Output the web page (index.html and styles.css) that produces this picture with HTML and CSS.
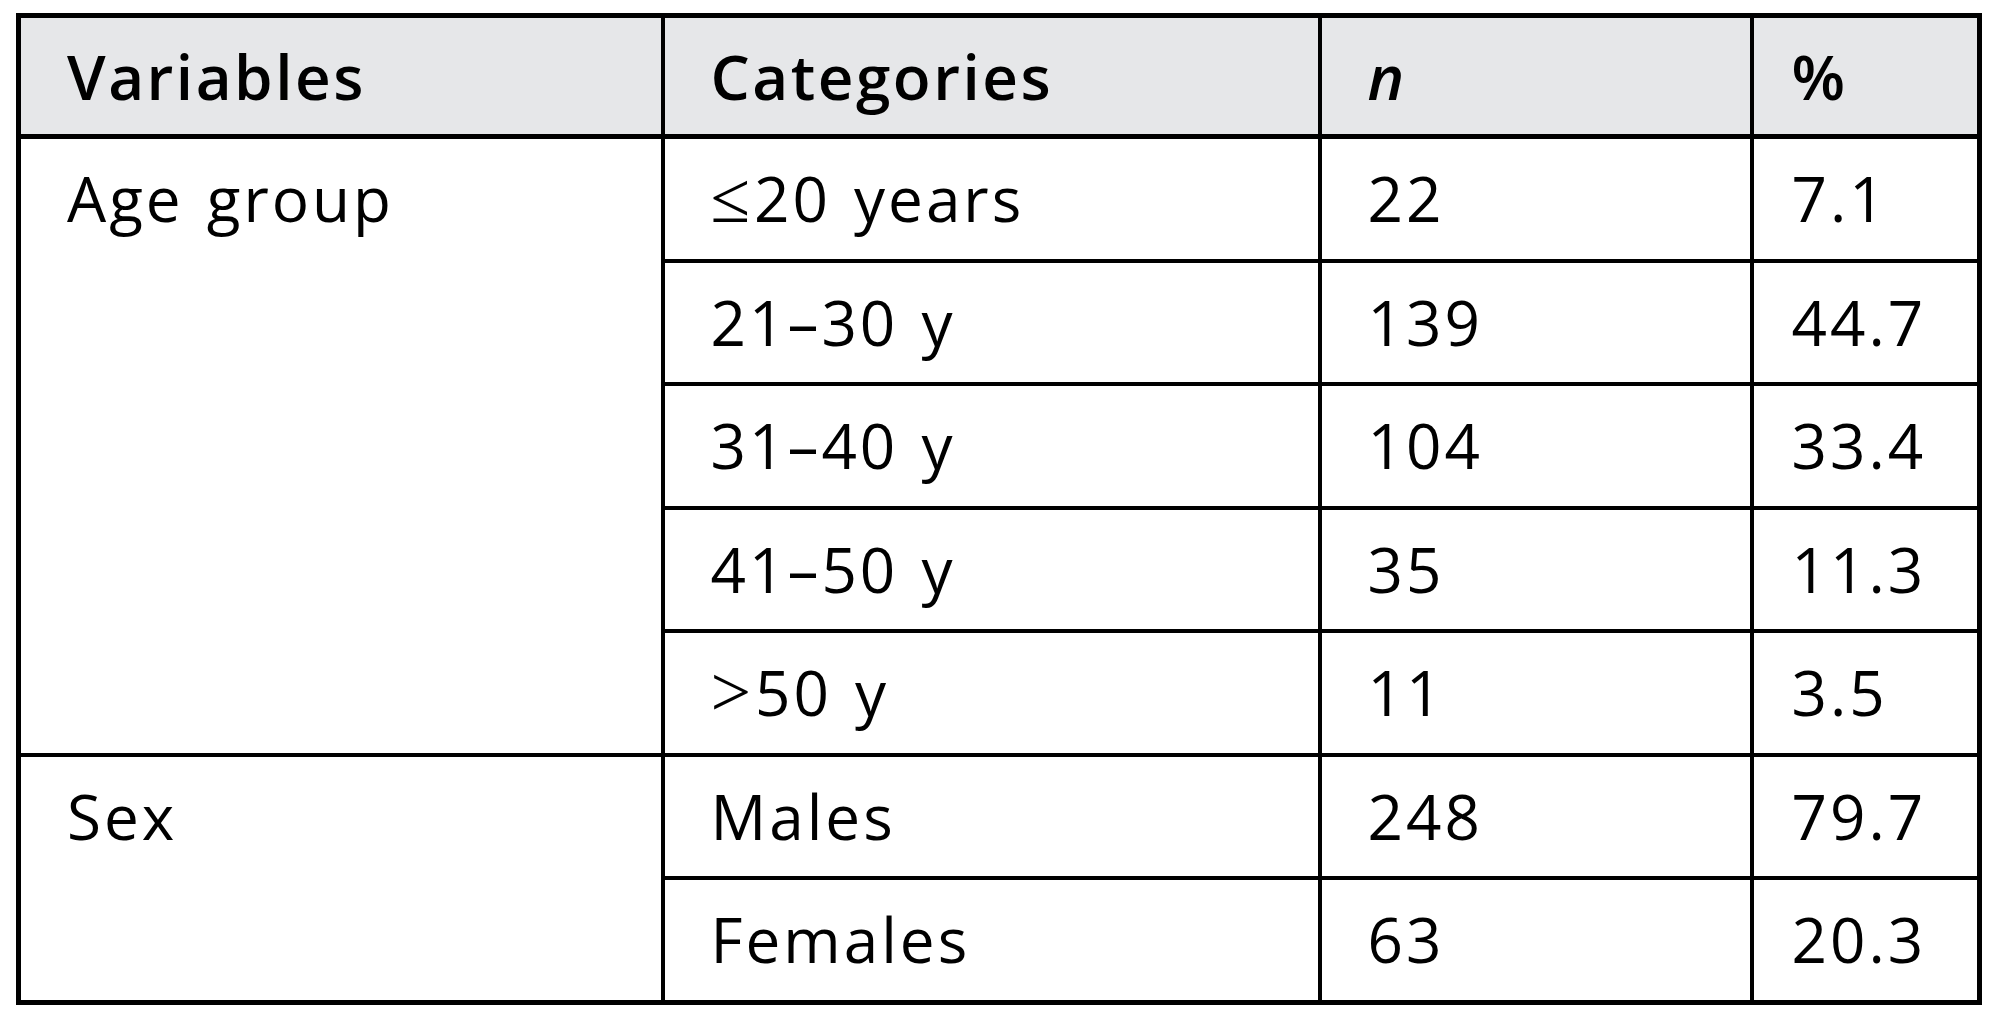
FILE: index.html
```html
<!DOCTYPE html>
<html lang="en">
<head>
    <meta charset="UTF-8">
    <title>Participants by age group and sex</title>
    <link rel="stylesheet" href="styles.css">
</head>
<body>

    <table class="stats">
        <colgroup>
            <col class="col-var">
            <col class="col-cat">
            <col class="col-n">
            <col class="col-pct">
        </colgroup>
        <thead>
            <tr>
                <th>Variables</th>
                <th>Categories</th>
                <th><i>n</i></th>
                <th class="pct">%</th>
            </tr>
        </thead>
        <tbody>
            <tr>
                <td rowspan="5">Age group</td>
                <td><span class="sym">&le;</span>20 years</td>
                <td>22</td>
                <td class="pct">7.1</td>
            </tr>
            <tr>
                <td>21–30 y</td>
                <td>139</td>
                <td class="pct">44.7</td>
            </tr>
            <tr>
                <td>31–40 y</td>
                <td>104</td>
                <td class="pct">33.4</td>
            </tr>
            <tr>
                <td>41–50 y</td>
                <td>35</td>
                <td class="pct">11.3</td>
            </tr>
            <tr>
                <td><span class="sym">&gt;</span>50 y</td>
                <td>11</td>
                <td class="pct">3.5</td>
            </tr>
            <tr>
                <td rowspan="2">Sex</td>
                <td>Males</td>
                <td>248</td>
                <td class="pct">79.7</td>
            </tr>
            <tr>
                <td>Females</td>
                <td>63</td>
                <td class="pct">20.3</td>
            </tr>
        </tbody>
    </table>

</body>
</html>
```

FILE: styles.css
```css
body {
    margin: 13px 0 0 16px;
    background: #fff;
    color: #000;
    font-family: "Open Sans", "Noto Sans", sans-serif;
}

.stats {
    border-collapse: collapse;
    table-layout: fixed;
    width: 1966px;
    border: 5px solid #000;
}

.col-var { width: 644px; }
.col-cat { width: 657px; }
.col-n { width: 432px; }
.col-pct { width: 228px; }

.stats th,
.stats td {
    border: 4px solid #000;
    padding: 0 10px 0 46px;
    height: 119.5px;
    text-align: left;
    vertical-align: top;
    font-size: 62px;
    line-height: 119px;
    letter-spacing: 3px;
    word-spacing: 4px;
    white-space: nowrap;
}

.stats thead th {
    background: #e6e7e9;
    font-weight: 600;
    border-bottom-width: 5px;
    height: 116px;
    line-height: 116px;
    letter-spacing: 2.5px;
}

.stats th i {
    font-weight: 600;
    letter-spacing: 0;
}

.stats .pct {
    padding-left: 38px;
}

.sym {
    font-family: "Liberation Serif", "DejaVu Serif", serif;
    font-weight: 400;
    font-size: 72px;
    letter-spacing: 4px;
}
```
